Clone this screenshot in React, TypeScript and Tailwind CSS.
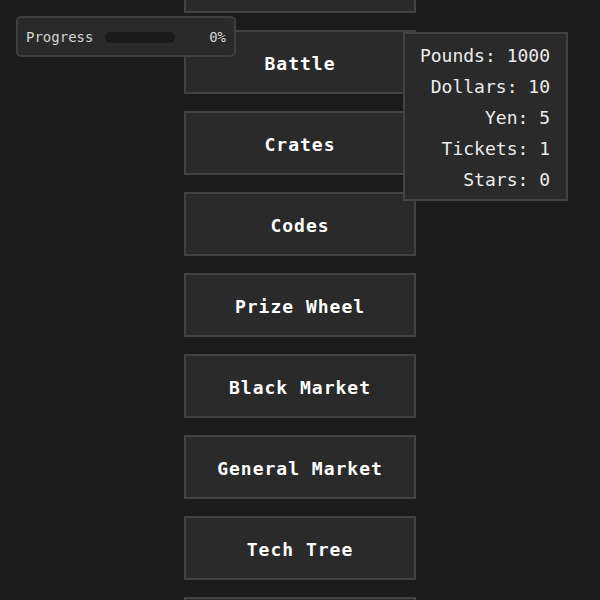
import React from "react";

const buttons = ["", "Battle", "Crates", "Codes", "Prize Wheel", "Black Market", "General Market", "Tech Tree", ""];
const stats = [
  ["Pounds", "1000"],
  ["Dollars", "10"],
  ["Yen", "5"],
  ["Tickets", "1"],
  ["Stars", "0"],
];

export default function App() {
  const mono = { fontFamily: '"DejaVu Sans Mono", "Liberation Mono", monospace' };
  return (
    <div className="relative w-[600px] h-[600px] overflow-hidden bg-[#1b1b1b]" style={mono}>
      <div className="flex flex-col items-center gap-[17px] mt-[-51px]">
        {buttons.map((b, i) => (
          <div
            key={i}
            className="w-[232px] h-[64px] shrink-0 flex items-center justify-center pt-[2px] bg-[#2a2a2a] border-2 border-[#434343] text-white font-bold text-[18px] tracking-[1px]"
          >
            {b}
          </div>
        ))}
      </div>

      <div className="absolute left-[16px] top-[16px] w-[220px] h-[41px] flex items-center pt-[1px] bg-[#2a2a2a] border-2 border-[#3f3f3f] rounded-[5px] px-[8px] text-[14px] text-[#d4d4d4]">
        <span>Progress</span>
        <div className="ml-[12px] w-[70px] h-[11px] rounded-full bg-[#1a1a1a]" />
        <span className="ml-auto">0%</span>
      </div>

      <div className="absolute left-[403px] top-[32px] w-[165px] h-[169px] bg-[#2a2a2a] border-2 border-[#434343] pt-[6px] pb-[4px] pr-[16px] flex flex-col items-end text-[18px] leading-[31px] text-[#ececec]">
        {stats.map(([k, v]) => (
          <div key={k}>
            {k}: {v}
          </div>
        ))}
      </div>
    </div>
  );
}
